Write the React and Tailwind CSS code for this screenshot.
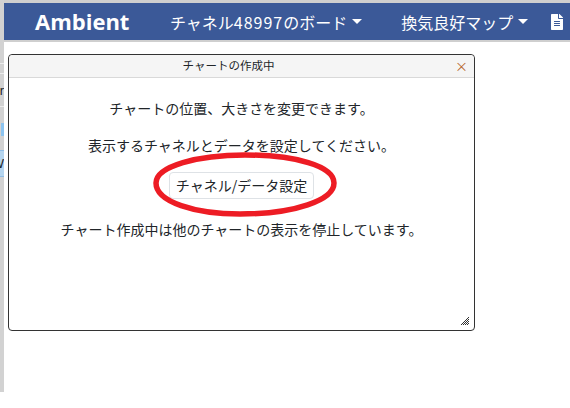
import { FaFileAlt } from 'react-icons/fa';

const jpFont = "font-['Noto_Sans_CJK_JP','Noto_Sans',sans-serif]";

const Caret = () => (
    <span className="ml-[5px] inline-block w-0 h-0 border-x-[5px] border-t-[5px] border-x-transparent border-t-white"></span>
);

// the page table behind the dialog only shows as a thin sliver on the left
const LeftSliver = () => (
    <div className="w-[4px] h-[392px] bg-[#d2d2d2] shrink-0 flex flex-col overflow-hidden font-['Liberation_Sans',sans-serif] text-[13px] leading-[15px] text-[#222222]">
        <div className="h-[64px] shrink-0 border-b border-[#ececec]"></div>
        <div className="h-[10px] shrink-0 border-b border-[#ececec]"></div>
        <div className="h-[33px] shrink-0 border-b border-[#ececec] flex justify-end items-center whitespace-nowrap">r</div>
        <div className="h-[43px] shrink-0 pt-[16px]">
            <div className="h-[13px] w-[3px] ml-[1px] bg-[#8cc4f0]"></div>
        </div>
        <div className="h-[27px] shrink-0 bg-[#b5d5ef] border-y border-[#8fbde6] flex justify-end items-center whitespace-nowrap">W</div>
    </div>
);

const App = () => {
    return (
        <div className={`w-[570px] h-[408px] bg-white flex overflow-hidden ${jpFont}`}>
            <LeftSliver />
            <div className="relative flex-1 flex flex-col">
                <div className="h-[42px] bg-[#3b5998] border-t-[3px] border-b-[2px] border-[#cfcfcf] flex items-center text-white text-[16px] shrink-0">
                    <span className="ml-[31px] w-[135px] text-[22px] font-bold font-['Open_Sans',sans-serif]">Ambient</span>
                    <span className="flex items-center whitespace-nowrap">チャネル<span className="tracking-[1px]">48997</span>のボード<Caret /></span>
                    <span className="ml-[39px] flex items-center whitespace-nowrap">換気良好マップ<Caret /></span>
                    <FaFileAlt className="ml-[21px]" size={16} />
                </div>

                <div className="relative z-10 ml-[4px] mt-[12px] w-[467px] h-[277px] bg-white border border-[#333333] rounded-[4px] flex flex-col text-[#212529]">
                    <div className="relative h-[23px] pr-[26px] bg-[#f5f5f5] border-b border-[#d9d9d9] rounded-t-[4px] text-center text-[11.5px] leading-[21px]">
                        チャートの作成中
                        <span className="absolute right-[6px] top-0 text-[#b5642a] text-[13px] leading-[21px]">×</span>
                    </div>
                    <div className="pt-[20px] flex flex-col items-center text-[14px] leading-[21px]">
                        <p className="mb-[16px]">チャートの位置、大きさを変更できます。</p>
                        <p className="mb-[16px]">表示するチャネルとデータを設定してください。</p>
                        <button className="h-[27px] px-[6px] border border-[#dee2e6] rounded-[4px] bg-white text-[14px] leading-[21px] text-[#212529]">チャネル/データ設定</button>
                        <p className="mt-[20px]">チャート作成中は他のチャートの表示を停止しています。</p>
                    </div>
                    <svg className="absolute right-[5px] bottom-[5px]" width="8" height="8" viewBox="0 0 8 8">
                        <path d="M0 8L8 0M2 8L8 2M4 8L8 4M6 8L8 6" stroke="#333333" strokeWidth="1" />
                    </svg>
                </div>

                <svg className="absolute left-[145px] top-[148px] z-20 pointer-events-none" width="196" height="72" viewBox="149 148 196 72">
                    <path d="M156 183C156 166 198 155 245 155C295 155 334 166 334 183C334 200 295 214 240 214C195 214 156 202 156 183Z" fill="none" stroke="#ed1c24" strokeWidth="5.5" />
                </svg>
            </div>
        </div>
    );
};

export default App;
